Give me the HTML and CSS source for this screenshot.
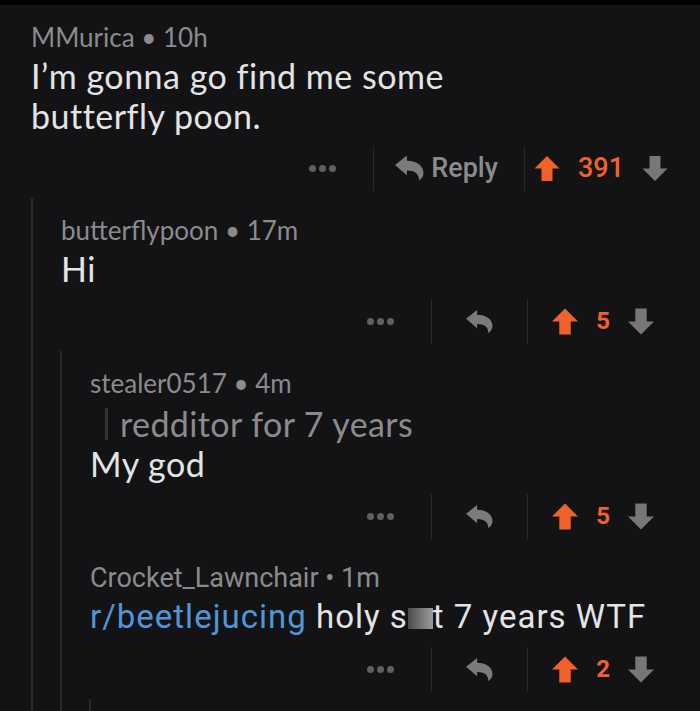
FILE: index.html
```html
<!DOCTYPE html>
<html>
<head>
<meta charset="utf-8">
<link rel="stylesheet" href="styles.css">
</head>
<body>
<div class="topbar"></div>
<div class="thread">
  <div class="comment">
    <div class="meta">MMurica • 10h</div>
    <div class="text text-wrap">I’m gonna go find me some butterfly poon.</div>
    <div class="actions actions-main">
      <div class="more"><span class="dot"></span><span class="dot"></span><span class="dot"></span></div>
      <div class="sep"></div>
      <div class="reply">
        <svg class="reply-icon" viewBox="0 0 28 24"><path d="M0 9 L11.5 0 L11.5 5 C21 5 28 10 27.5 17.5 C27.2 20.5 25.5 22.8 23 24 C23.5 19 20.5 14.5 11.5 14.5 L11.5 19 Z"/></svg>
        <span class="reply-label">Reply</span>
      </div>
      <div class="sep"></div>
      <div class="vote">
        <svg class="arrow up" viewBox="0 0 26 26"><path d="M13 0.5 L25.5 13 L18.5 13 L18.5 25.5 L7.5 25.5 L7.5 13 L0.5 13 Z"/></svg>
        <span class="score">391</span>
        <svg class="arrow down" viewBox="0 0 26 26"><path d="M13 25.5 L25.5 13 L18.5 13 L18.5 0.5 L7.5 0.5 L7.5 13 L0.5 13 Z"/></svg>
      </div>
    </div>
    <div class="children">
      <div class="comment">
        <div class="meta">butterflypoon • 17m</div>
        <div class="text">Hi</div>
        <div class="actions">
          <div class="more"><span class="dot"></span><span class="dot"></span><span class="dot"></span></div>
          <div class="sep"></div>
          <div class="reply">
            <svg class="reply-icon" viewBox="0 0 28 24"><path d="M0 9 L11.5 0 L11.5 5 C21 5 28 10 27.5 17.5 C27.2 20.5 25.5 22.8 23 24 C23.5 19 20.5 14.5 11.5 14.5 L11.5 19 Z"/></svg>
          </div>
          <div class="sep"></div>
          <div class="vote">
            <svg class="arrow up" viewBox="0 0 26 26"><path d="M13 0.5 L25.5 13 L18.5 13 L18.5 25.5 L7.5 25.5 L7.5 13 L0.5 13 Z"/></svg>
            <span class="score">5</span>
            <svg class="arrow down" viewBox="0 0 26 26"><path d="M13 25.5 L25.5 13 L18.5 13 L18.5 0.5 L7.5 0.5 L7.5 13 L0.5 13 Z"/></svg>
          </div>
        </div>
        <div class="children">
          <div class="comment">
            <div class="meta">stealer0517 • 4m</div>
            <div class="flair"><span class="flair-bar"></span>redditor for 7 years</div>
            <div class="text">My god</div>
            <div class="actions">
              <div class="more"><span class="dot"></span><span class="dot"></span><span class="dot"></span></div>
              <div class="sep"></div>
              <div class="reply">
                <svg class="reply-icon" viewBox="0 0 28 24"><path d="M0 9 L11.5 0 L11.5 5 C21 5 28 10 27.5 17.5 C27.2 20.5 25.5 22.8 23 24 C23.5 19 20.5 14.5 11.5 14.5 L11.5 19 Z"/></svg>
              </div>
              <div class="sep"></div>
              <div class="vote">
                <svg class="arrow up" viewBox="0 0 26 26"><path d="M13 0.5 L25.5 13 L18.5 13 L18.5 25.5 L7.5 25.5 L7.5 13 L0.5 13 Z"/></svg>
                <span class="score">5</span>
                <svg class="arrow down" viewBox="0 0 26 26"><path d="M13 25.5 L25.5 13 L18.5 13 L18.5 0.5 L7.5 0.5 L7.5 13 L0.5 13 Z"/></svg>
              </div>
            </div>
          </div>
          <div class="comment alt">
            <div class="meta">Crocket_Lawnchair • 1m</div>
            <div class="text"><span class="link">r/beetlejucing</span> holy s<span class="censor"></span>t 7 years WTF</div>
            <div class="actions">
              <div class="more"><span class="dot"></span><span class="dot"></span><span class="dot"></span></div>
              <div class="sep"></div>
              <div class="reply">
                <svg class="reply-icon" viewBox="0 0 28 24"><path d="M0 9 L11.5 0 L11.5 5 C21 5 28 10 27.5 17.5 C27.2 20.5 25.5 22.8 23 24 C23.5 19 20.5 14.5 11.5 14.5 L11.5 19 Z"/></svg>
              </div>
              <div class="sep"></div>
              <div class="vote">
                <svg class="arrow up" viewBox="0 0 26 26"><path d="M13 0.5 L25.5 13 L18.5 13 L18.5 25.5 L7.5 25.5 L7.5 13 L0.5 13 Z"/></svg>
                <span class="score">2</span>
                <svg class="arrow down" viewBox="0 0 26 26"><path d="M13 25.5 L25.5 13 L18.5 13 L18.5 0.5 L7.5 0.5 L7.5 13 L0.5 13 Z"/></svg>
              </div>
            </div>
            <div class="children children-tail"></div>
          </div>
        </div>
      </div>
    </div>
  </div>
</div>
</body>
</html>
```
FILE: styles.css
```css
html, body {
  margin: 0;
  padding: 0;
  background: #131315;
  height: 711px;
  overflow: hidden;
}
body {
  font-family: Lato, "Open Sans", sans-serif;
}
.topbar {
  height: 5px;
  background: #000;
}
.thread {
  padding-left: 31px;
  padding-right: 22px;
}
.comment {
  padding-top: 13px;
}
.meta {
  font-size: 26px;
  line-height: 38px;
  color: #8b8b8d;
  white-space: nowrap;
}
.text {
  font-size: 34px;
  line-height: 40px;
  letter-spacing: 0.5px;
  color: #e4e4e4;
  white-space: nowrap;
}
.text-wrap {
  white-space: normal;
  max-width: 480px;
}
.flair {
  display: flex;
  align-items: center;
  font-size: 34px;
  line-height: 40px;
  letter-spacing: 0.4px;
  color: #8b8b8d;
  margin-top: 2px;
  margin-left: 15px;
}
.flair-bar {
  width: 3px;
  height: 32px;
  background: #333336;
  margin-right: 12px;
}
.alt .meta {
  font-family: Roboto, sans-serif;
  font-size: 27px;
  letter-spacing: 0;
}
.alt .text {
  font-family: Roboto, sans-serif;
  font-size: 33px;
  letter-spacing: 1px;
}
.link {
  color: #4f96d8;
}
.censor {
  display: inline-block;
  width: 25px;
  height: 21px;
  vertical-align: -1px;
  background: linear-gradient(90deg, #4a4a4c 0%, #7d7d80 60%, #9a9a9c 100%);
}
.actions {
  display: flex;
  justify-content: flex-end;
  align-items: center;
  height: 46px;
  margin-top: 9px;
  margin-bottom: 7px;
}
.more {
  display: flex;
  gap: 3px;
  padding-right: 37px;
}
.dot {
  width: 7px;
  height: 7px;
  border-radius: 50%;
  background: #606063;
}
.sep {
  width: 1px;
  height: 45px;
  background: #28282b;
}
.reply {
  display: flex;
  align-items: center;
  padding-left: 33px;
  padding-right: 33px;
}
.reply-icon {
  width: 29px;
  height: 23px;
  fill: #7b7b7e;
}
.vote {
  display: flex;
  align-items: center;
  padding-left: 23px;
  padding-right: 23px;
  gap: 17px;
}
.arrow {
  width: 28px;
  height: 27px;
}
.up {
  fill: #f1622b;
}
.down {
  fill: #77777a;
}
.score {
  font-family: Roboto, sans-serif;
  font-weight: 700;
  font-size: 24px;
  color: #f1622b;
}
.actions-main .more {
  padding-right: 37px;
}
.actions-main .reply {
  padding-left: 21px;
  padding-right: 26px;
  gap: 7px;
}
.actions-main .reply-icon {
  height: 26px;
}
.reply-label {
  font-family: Roboto, sans-serif;
  font-weight: 500;
  font-size: 27px;
  color: #8b8b8d;
}
.actions-main .vote {
  padding-left: 9px;
  padding-right: 10px;
  gap: 18px;
}
.actions-main .arrow {
  width: 26px;
  height: 27px;
}
.actions-main .score {
  font-weight: 500;
  font-size: 27px;
}
.children {
  border-left: 2px solid #29292c;
  padding-left: 28px;
}
.children .children {
  margin-left: -1px;
}
.children-tail {
  height: 40px;
}
```
